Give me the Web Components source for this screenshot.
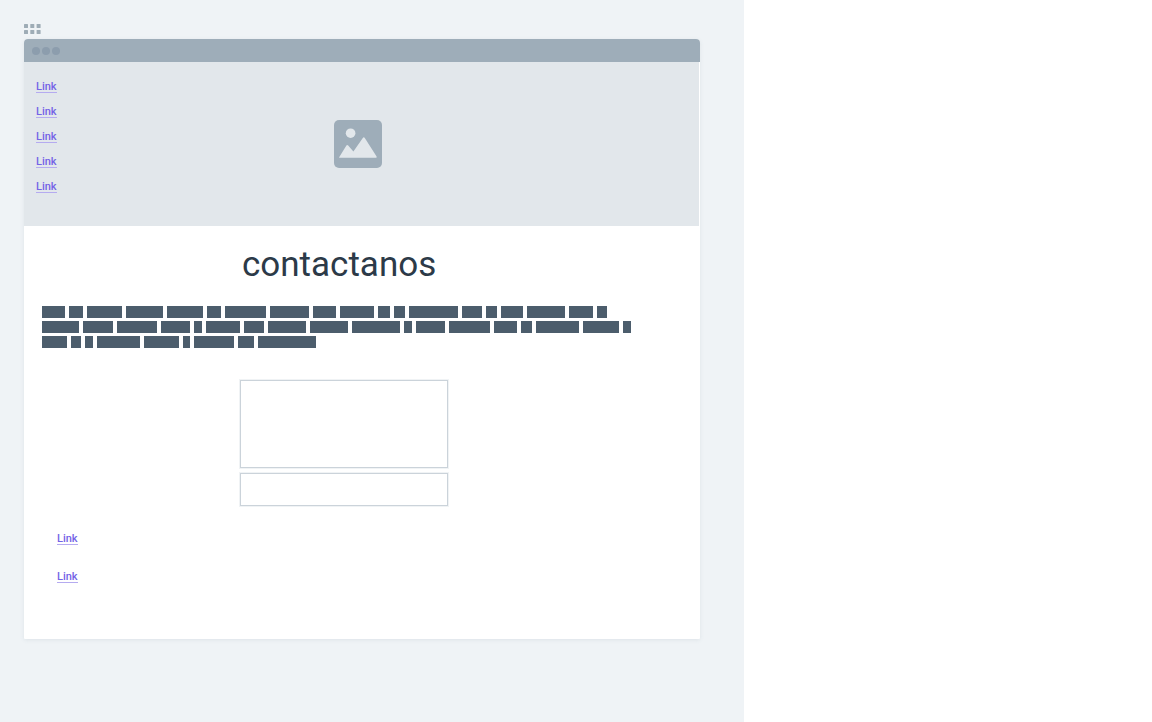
<!DOCTYPE html>
<html lang="es">
<head>
<meta charset="utf-8">
<meta name="viewport" content="width=device-width, initial-scale=1">
<title>contactanos</title>
<style>
  body { margin: 0; background: #fff; font-family: Roboto, "Liberation Sans", sans-serif; }
</style>
</head>
<body>
<wire-board>
  <drag-handle></drag-handle>
  <browser-window>
    <hero-banner>
      <nav-link></nav-link>
      <nav-link></nav-link>
      <nav-link></nav-link>
      <nav-link></nav-link>
      <nav-link></nav-link>
    </hero-banner>
    <contact-section heading="contactanos">
      <text-blocks slot="text" lines="23 14 35 37 36 14 41 39 23 34 12 11 49 20 11 22 38 24 10|37 30 40 29 8 34 20 38 38 48 8 29 41 23 11 43 36 8|25 10 8 43 35 7 40 16 58"></text-blocks>
      <contact-form slot="form"></contact-form>
      <nav-link></nav-link>
      <nav-link></nav-link>
    </contact-section>
  </browser-window>
</wire-board>
<script>
  function define(name, html, setup) {
    const template = document.createElement("template");
    template.innerHTML = html;
    customElements.define(name, class extends HTMLElement {
      constructor() {
        super();
        this.attachShadow({ mode: "open" }).append(template.content.cloneNode(true));
      }
      connectedCallback() {
        if (setup) setup(this, this.shadowRoot);
      }
    });
  }

  define("wire-board", `
    <style>
      :host { display: grid; grid-template-columns: 31fr 17fr; min-height: 100vh; }
      main { min-width: 0; box-sizing: border-box; padding: 24px 44px 24px 24px; background: #eff3f6; }
    </style>
    <main><slot></slot></main>`);

  define("drag-handle", `
    <style>
      :host { display: block; height: 10px; margin-bottom: 5px; }
      svg { display: block; fill: #9eacb6; }
    </style>
    <svg width="17" height="10" viewBox="0 0 17 10" aria-hidden="true">
      <rect width="4" height="4" rx=".6"/><rect x="6.3" width="4" height="4" rx=".6"/><rect x="12.6" width="4" height="4" rx=".6"/>
      <rect y="6" width="4" height="4" rx=".6"/><rect x="6.3" y="6" width="4" height="4" rx=".6"/><rect x="12.6" y="6" width="4" height="4" rx=".6"/>
    </svg>`);

  define("browser-window", `
    <style>
      :host { display: block; background: #fff; border-radius: 4px 4px 1px 1px; box-shadow: 0 1px 4px rgba(80, 100, 120, .1); }
      header { display: flex; align-items: center; gap: 2px; height: 23px; padding-left: 8px; background: #9eadb9; border-radius: 4px 4px 0 0; }
      i { width: 8px; height: 8px; border-radius: 50%; background: #8c9dad; }
    </style>
    <header><i></i><i></i><i></i></header>
    <slot></slot>`);

  define("nav-link", `
    <style>
      :host { display: block; }
      a { display: block; width: max-content; font-size: 11px; line-height: 10px; font-weight: 500; color: #7463e6; text-decoration: none; border-bottom: 1px solid #b5abf0; }
    </style>
    <a href="#">Link</a>`);

  define("hero-banner", `
    <style>
      :host { display: grid; align-items: center; padding: 0 20px 0 12px; margin-right: 1px; min-height: 164px; background: #e2e7eb; }
      nav, svg { grid-area: 1 / 1; }
      nav { display: grid; gap: 14px; align-self: start; justify-self: start; padding: 20px 0; }
      svg { justify-self: center; }
    </style>
    <nav><slot></slot></nav>
    <svg width="48" height="48" viewBox="0 0 48 48" role="img" aria-label="Imagen">
      <rect width="48" height="48" rx="5" fill="#9eadb9"/>
      <circle cx="16.6" cy="13.2" r="4.8" fill="#e2e7eb"/>
      <path d="M5 37.4 12.4 25.6Q13.2 24.4 14.2 25.6L19.4 31.4 28.8 18Q29.8 16.6 30.8 18L42.6 36.4Q43 37.6 42 37.8H5.6Z" fill="#e2e7eb"/>
    </svg>`);

  define("contact-section", `
    <style>
      :host { display: block; padding: 19px 54px 56px 18px; }
      .column { width: 208px; margin: 0 auto; }
      h1 { margin: 0 0 21px; padding-left: 2px; font-size: 35px; line-height: 40px; font-weight: 400; color: #2c3a48; }
      .form { margin-top: 32px; }
      nav { display: grid; gap: 27px; margin-top: 28px; padding-left: 15px; }
    </style>
    <div class="column"><h1></h1></div>
    <slot name="text"></slot>
    <div class="column form"><slot name="form"></slot></div>
    <nav><slot></slot></nav>`,
    (host, root) => { root.querySelector("h1").textContent = host.getAttribute("heading"); });

  define("text-blocks", `
    <style>
      :host { display: grid; gap: 3px; }
      div { display: flex; gap: 4px; height: 12px; }
      span { flex: 0 1 auto; background: #4c5d6c; }
    </style>`,
    (host, root) => {
      if (root.querySelector("div")) return;
      for (const line of host.getAttribute("lines").split("|")) {
        const row = document.createElement("div");
        for (const width of line.split(" ")) {
          const word = document.createElement("span");
          word.style.width = width + "px";
          row.append(word);
        }
        root.append(row);
      }
    });

  define("contact-form", `
    <style>
      :host { display: block; }
      form { display: grid; gap: 5px; }
      textarea, input { display: block; box-sizing: border-box; width: 100%; margin: 0; padding: 8px; border: 1px solid #cbd3da; outline: 1px solid #f0f3f5; border-radius: 0; background: #fff; font: inherit; font-size: 12px; color: #2c3a48; resize: none; }
      textarea { height: 88px; }
      input { height: 33px; }
    </style>
    <form>
      <textarea aria-label="Mensaje"></textarea>
      <input type="text" aria-label="Nombre">
    </form>`);
</script>
</body>
</html>
